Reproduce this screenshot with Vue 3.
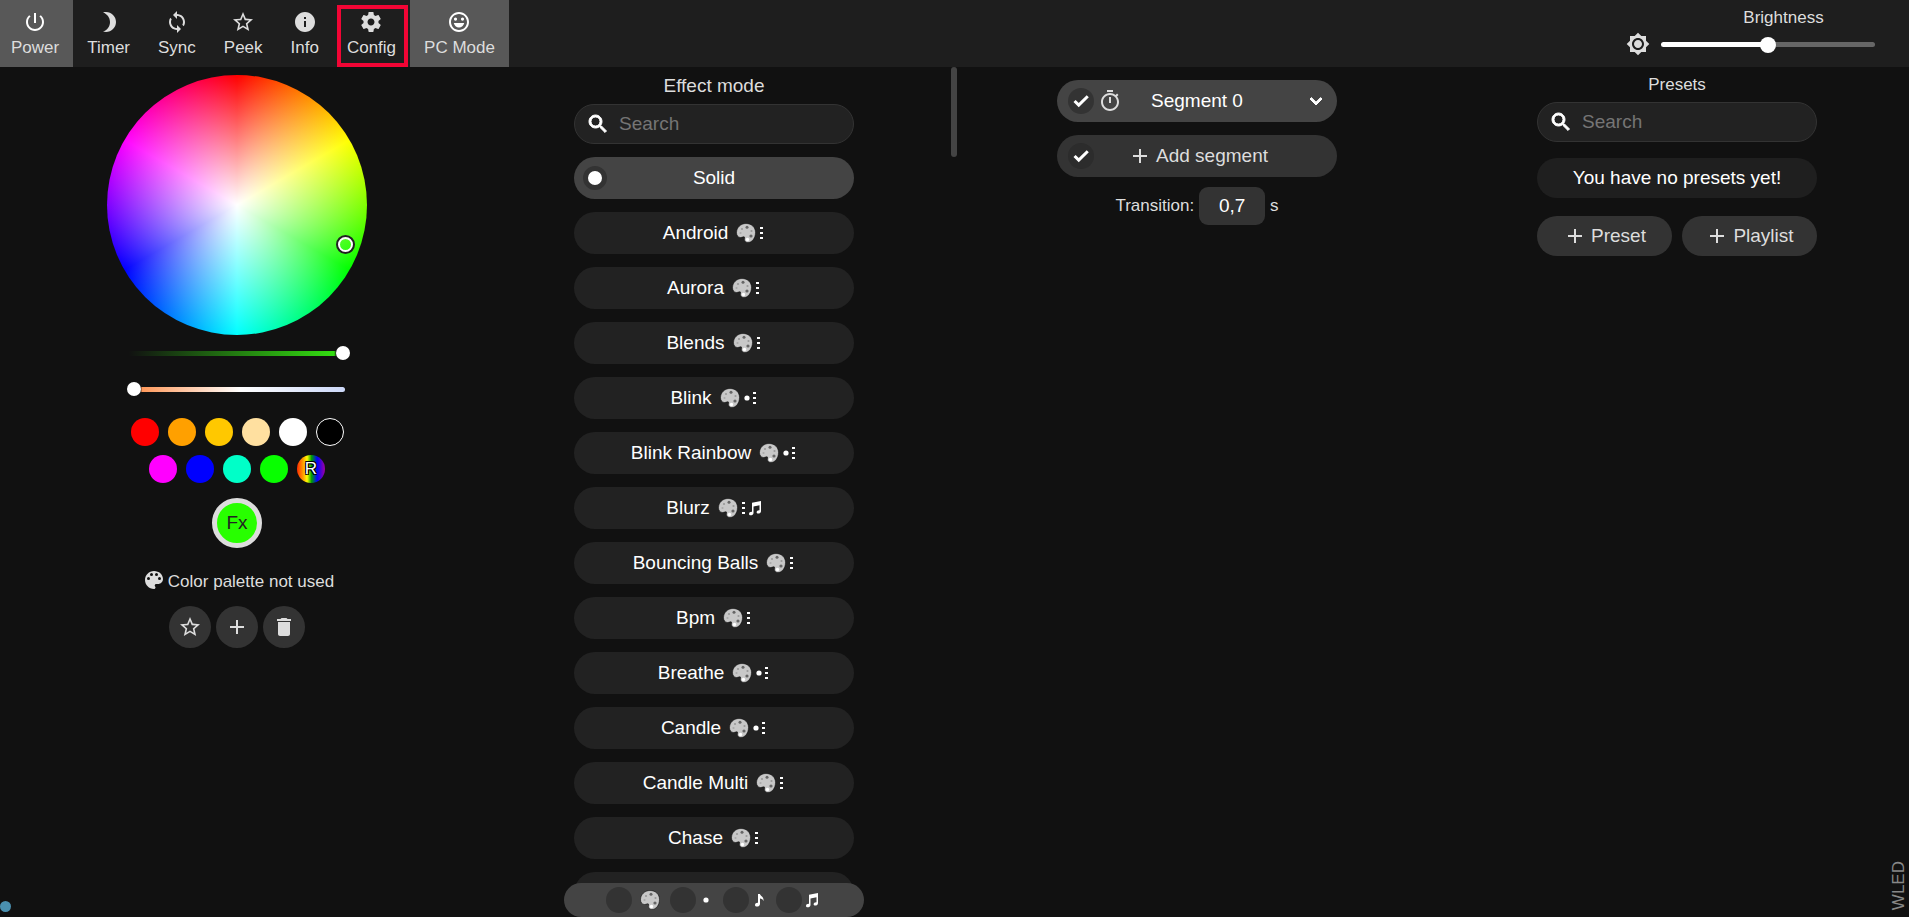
<script setup>
import { ref, computed } from 'vue'

const icons = {
    power: 'M13 3h-2v10h2V3zm4.83 2.17l-1.42 1.42C17.99 7.86 19 9.81 19 12c0 3.87-3.13 7-7 7s-7-3.13-7-7c0-2.19 1.01-4.14 2.58-5.42L6.17 5.17C4.23 6.82 3 9.26 3 12c0 4.97 4.03 9 9 9s9-4.03 9-9c0-2.74-1.23-5.18-3.17-6.83z',
    moon: 'M9 2c-1.05 0-2.05.16-3 .46 4.06 1.27 7 5.06 7 9.54 0 4.48-2.94 8.27-7 9.54.95.3 1.95.46 3 .46 5.52 0 10-4.48 10-10S14.52 2 9 2z',
    sync: 'M12 4V1L8 5l4 4V6c3.31 0 6 2.69 6 6 0 1.01-.25 1.97-.7 2.8l1.46 1.46C19.54 15.03 20 13.57 20 12c0-4.42-3.58-8-8-8zm0 14c-3.31 0-6-2.69-6-6 0-1.01.25-1.97.7-2.8L5.24 7.74C4.46 8.97 4 10.43 4 12c0 4.42 3.58 8 8 8v3l4-4-4-4v3z',
    star: 'M22 9.24l-7.19-.62L12 2 9.19 8.63 2 9.24l5.46 4.73L5.82 21 12 17.27 18.18 21l-1.63-7.03L22 9.24zM12 15.4l-3.76 2.27 1-4.28-3.32-2.88 4.38-.38L12 6.1l1.71 4.04 4.38.38-3.32 2.88 1 4.28L12 15.4z',
    info: 'M12 2C6.48 2 2 6.48 2 12s4.48 10 10 10 10-4.48 10-10S17.52 2 12 2zm1 15h-2v-6h2v6zm0-8h-2V7h2v2z',
    cog: 'M19.43 12.98c.04-.32.07-.64.07-.98s-.03-.66-.07-.98l2.11-1.65c.19-.15.24-.42.12-.64l-2-3.46c-.12-.22-.39-.3-.61-.22l-2.49 1c-.52-.4-1.08-.73-1.69-.98l-.38-2.65C14.46 2.18 14.25 2 14 2h-4c-.25 0-.46.18-.49.42l-.38 2.65c-.61.25-1.17.59-1.69.98l-2.49-1c-.23-.09-.49 0-.61.22l-2 3.46c-.13.22-.07.49.12.64l2.11 1.65c-.04.32-.07.65-.07.98s.03.66.07.98l-2.11 1.65c-.19.15-.24.42-.12.64l2 3.46c.12.22.39.3.61.22l2.49-1c.52.4 1.08.73 1.69.98l.38 2.65c.03.24.24.42.49.42h4c.25 0 .46-.18.49-.42l.38-2.65c.61-.25 1.17-.59 1.69-.98l2.49 1c.23.09.49 0 .61-.22l2-3.46c.12-.22.07-.49-.12-.64l-2.11-1.65zM12 15.5c-1.93 0-3.5-1.57-3.5-3.5s1.57-3.5 3.5-3.5 3.5 1.57 3.5 3.5-1.57 3.5-3.5 3.5z',
    smile: 'M12 2C6.48 2 2 6.48 2 12s4.48 10 10 10 10-4.48 10-10S17.52 2 12 2zm0 18c-4.42 0-8-3.58-8-8s3.58-8 8-8 8 3.58 8 8-3.58 8-8 8zM8.5 7.5a1.6 1.6 0 1 0 0 3.2 1.6 1.6 0 0 0 0-3.2zm7 0a1.6 1.6 0 1 0 0 3.2 1.6 1.6 0 0 0 0-3.2zM6.8 13c.5 2.6 2.6 4.5 5.2 4.5s4.7-1.9 5.2-4.5z',
    sun: 'M20 8.69V4h-4.69L12 .69 8.69 4H4v4.69L.69 12 4 15.31V20h4.69L12 23.31 15.31 20H20v-4.69L23.31 12 20 8.69zM12 18c-3.31 0-6-2.69-6-6s2.69-6 6-6 6 2.69 6 6-2.69 6-6 6zm0-10c-2.21 0-4 1.79-4 4s1.79 4 4 4 4-1.79 4-4-1.79-4-4-4z',
    search: 'M15.5 14h-.79l-.28-.27C15.41 12.59 16 11.11 16 9.5 16 5.91 13.09 3 9.5 3S3 5.91 3 9.5 5.91 16 9.5 16c1.61 0 3.09-.59 4.23-1.57l.27.28v.79l5 4.99L20.49 19l-4.99-5zm-6 0C7.01 14 5 11.99 5 9.5S7.01 5 9.5 5 14 7.01 14 9.5 11.99 14 9.5 14z',
    palette: 'M12 3c-4.97 0-9 4.03-9 9s4.03 9 9 9c.83 0 1.5-.67 1.5-1.5 0-.39-.15-.74-.39-1.01-.23-.26-.38-.61-.38-.99 0-.83.67-1.5 1.5-1.5H16c2.76 0 5-2.24 5-5 0-4.42-4.03-8-9-8zm-5.5 9a1.5 1.5 0 1 1 0-3 1.5 1.5 0 0 1 0 3zm3-4a1.5 1.5 0 1 1 0-3 1.5 1.5 0 0 1 0 3zm5 0a1.5 1.5 0 1 1 0-3 1.5 1.5 0 0 1 0 3zm3 4a1.5 1.5 0 1 1 0-3 1.5 1.5 0 0 1 0 3z',
    plus: 'M19 13h-6v6h-2v-6H5v-2h6V5h2v6h6v2z',
    trash: 'M6 19c0 1.1.9 2 2 2h8c1.1 0 2-.9 2-2V7H6v12zM19 4h-3.5l-1-1h-5l-1 1H5v2h14V4z',
    timer: 'M15 1H9v2h6V1zm-4 13h2V8h-2v6zm8.03-6.61l1.42-1.42c-.43-.51-.9-.99-1.41-1.41l-1.42 1.42C16.07 4.74 14.12 4 12 4c-4.97 0-9 4.03-9 9s4.02 9 9 9 9-4.03 9-9c0-2.12-.74-4.07-1.97-5.61zM12 20c-3.87 0-7-3.13-7-7s3.13-7 7-7 7 3.13 7 7-3.13 7-7 7z',
    check: 'M9 16.17L4.83 12l-1.42 1.41L9 19 21 7l-1.41-1.41z',
    down: 'M7.41 8.59L12 13.17l4.59-4.58L18 10l-6 6-6-6z'
}

const navItems = [
    { name: 'Power', icon: 'power', active: true },
    { name: 'Timer', icon: 'moon' },
    { name: 'Sync', icon: 'sync' },
    { name: 'Peek', icon: 'star' },
    { name: 'Info', icon: 'info' },
    { name: 'Config', icon: 'cog', marked: true },
    { name: 'PC Mode', icon: 'smile', active: true }
]

const quickColors = [
    ['#ff0000', '#ffa000', '#ffc800', '#ffe0a0', '#ffffff', '#000000'],
    ['#ff00ff', '#0000ff', '#00ffc8', '#08ff00', 'random']
]

// flags: p = palette, 0 = single pixel, 1 = strip, f = frequency
const effects = [
    { name: 'Solid', flags: '' },
    { name: 'Android', flags: 'p1' },
    { name: 'Aurora', flags: 'p1' },
    { name: 'Blends', flags: 'p1' },
    { name: 'Blink', flags: 'p01' },
    { name: 'Blink Rainbow', flags: 'p01' },
    { name: 'Blurz', flags: 'p1f' },
    { name: 'Bouncing Balls', flags: 'p1' },
    { name: 'Bpm', flags: 'p1' },
    { name: 'Breathe', flags: 'p01' },
    { name: 'Candle', flags: 'p01' },
    { name: 'Candle Multi', flags: 'p1' },
    { name: 'Chase', flags: 'p1' },
    { name: 'Chase 2', flags: 'p1' }
]

const filters = [
    { flag: 'p', label: 'Palette' },
    { flag: '0', label: 'Single pixel' },
    { flag: 'v', label: 'Volume' },
    { flag: 'f', label: 'Frequency' }
]

const selected = ref('Solid')
const effectQuery = ref('')
const presetQuery = ref('')
const transition = ref('0,7')
const brightness = ref(128)

const shownEffects = computed(() =>
    effects.filter(e => e.name.toLowerCase().includes(effectQuery.value.toLowerCase()))
)
const brightnessPercent = computed(() => brightness.value / 255 * 100 + '%')
</script>

<template>
    <div class="app">
        <svg class="defs" aria-hidden="true">
            <symbol id="flag-p" viewBox="0 0 20 20">
                <path fill="#c8c8c8" stroke="#111" stroke-width=".6" d="M10 .5C15.5.5 19.5 4.3 19.5 9.5c0 5.6-3.5 10-7.5 10-2.5 0-3.6-1.6-3.6-3.2 0-.9.4-1.7.1-2.2-.6-.9-2 .4-4 .4C2 14.5.5 12.3.5 9.7.5 4.5 4.8.5 10 .5z" />
                <g fill="#666">
                    <circle cx="11" cy="4.2" r="1.5" />
                    <circle cx="15" cy="13" r="1.6" />
                    <circle cx="15.5" cy="8" r="1.1" fill="#999" />
                    <circle cx="6" cy="6" r="1.1" fill="#999" />
                    <circle cx="4.5" cy="10" r="1.1" fill="#aaa" />
                </g>
                <circle cx="11.5" cy="16.5" r="1.7" fill="#fff" />
            </symbol>
            <symbol id="flag-0" viewBox="0 0 8 20"><circle cx="4" cy="10" r="2.6" fill="#fff" /></symbol>
            <symbol id="flag-1" viewBox="0 0 6 20">
                <path fill="#fff" d="M1 4h3v2H1zM1 9h3v2H1zM1 14h3v2H1z" />
            </symbol>
            <symbol id="flag-v" viewBox="0 0 14 20">
                <path fill="#fff" d="M6 4h2c.2 2 4 2.5 3.5 7-.7-1.7-2-2.2-3.5-2.4V14c0 3-5 3.500-5 1 0-1.7 1.6-2.4 3-2.2z" />
            </symbol>
            <symbol id="flag-f" viewBox="0 0 14 20">
                <path fill="#fff" d="M4 4.800L13 3v10.200c0 2.600-4.400 3.300-4.400 1 0-1.500 1.500-2.200 2.900-2V7.200l-6 1.200v6.500c0 2.600-4.500 3.300-4.500 1 0-1.500 1.500-2.200 3-2z" />
            </symbol>
        </svg>

        <header class="top">
            <nav class="nav">
                <button v-for="item in navItems" :key="item.name" class="nav-btn" :class="{ active: item.active, marked: item.marked }">
                    <svg class="icon" viewBox="0 0 24 24"><path :d="icons[item.icon]" /></svg>
                    <span>{{ item.name }}</span>
                </button>
            </nav>
            <div class="brightness">
                <label for="bri">Brightness</label>
                <div class="bri-row">
                    <svg class="icon" viewBox="0 0 24 24"><path :d="icons.sun" /></svg>
                    <input id="bri" v-model="brightness" class="range bri" type="range" min="0" max="255" :style="{ '--fill': brightnessPercent }">
                </div>
            </div>
        </header>

        <main class="columns">
            <section class="col colors">
                <div class="wheel"><span class="handle"></span></div>
                <input class="range value" type="range" min="0" max="100" value="100" aria-label="Value">
                <input class="range kelvin" type="range" min="0" max="100" value="0" aria-label="Temperature">
                <div class="swatches">
                    <div v-for="(row, i) in quickColors" :key="i" class="swatch-row">
                        <template v-for="c in row" :key="c">
                            <button v-if="c === 'random'" class="swatch random">R</button>
                            <button v-else class="swatch" :class="{ outlined: c === '#000000' }" :style="{ backgroundColor: c }" :aria-label="c"></button>
                        </template>
                    </div>
                </div>
                <button class="slot">Fx</button>
                <p class="palette-note">
                    <svg viewBox="2 2 20 20"><path :d="icons.palette" /></svg>
                    Color palette not used
                </p>
                <div class="round-row">
                    <button v-for="name in ['star', 'plus', 'trash']" :key="name" class="round" :aria-label="name">
                        <svg class="icon" viewBox="0 0 24 24"><path :d="icons[name]" /></svg>
                    </button>
                </div>
            </section>

            <section class="col effects">
                <h2>Effect mode</h2>
                <div class="search">
                    <svg class="icon" viewBox="0 0 24 24"><path :d="icons.search" /></svg>
                    <input v-model="effectQuery" type="text" placeholder="Search" aria-label="Search effects">
                </div>
                <div class="list">
                    <label v-for="e in shownEffects" :key="e.name" class="effect" :class="{ selected: selected === e.name }">
                        <input v-model="selected" type="radio" name="fx" :value="e.name">
                        <span>{{ e.name }}</span>
                        <span v-if="e.flags" class="flags">
                            <svg v-for="f in e.flags" :key="f" :class="'flag-' + f"><use :href="'#flag-' + f" /></svg>
                        </span>
                    </label>
                </div>
                <div class="filters">
                    <label v-for="f in filters" :key="f.flag" class="filter">
                        <input type="checkbox" :aria-label="f.label">
                        <svg :class="'flag-' + f.flag"><use :href="'#flag-' + f.flag" /></svg>
                    </label>
                </div>
                <span class="scroll-thumb"></span>
            </section>

            <section class="col segments">
                <div class="segment">
                    <label class="tick">
                        <input type="checkbox" checked aria-label="Select segment">
                        <svg viewBox="0 0 24 24"><path :d="icons.check" /></svg>
                    </label>
                    <svg class="icon" viewBox="0 0 24 24"><path :d="icons.timer" /></svg>
                    <span class="segment-name">Segment 0</span>
                    <button class="expand" aria-label="Expand">
                        <svg viewBox="0 0 24 24"><path :d="icons.down" /></svg>
                    </button>
                </div>
                <div class="segment add">
                    <label class="tick">
                        <input type="checkbox" checked aria-label="Select all segments">
                        <svg viewBox="0 0 24 24"><path :d="icons.check" /></svg>
                    </label>
                    <button class="add-btn">
                        <svg class="icon" viewBox="0 0 24 24"><path :d="icons.plus" /></svg>
                        Add segment
                    </button>
                </div>
                <div class="transition">
                    <label for="tt">Transition:</label>
                    <input id="tt" v-model="transition" type="text">
                    <span>s</span>
                </div>
            </section>

            <section class="col presets">
                <h3>Presets</h3>
                <div class="search">
                    <svg class="icon" viewBox="0 0 24 24"><path :d="icons.search" /></svg>
                    <input v-model="presetQuery" type="text" placeholder="Search" aria-label="Search presets">
                </div>
                <p class="no-presets">You have no presets yet!</p>
                <div class="preset-row">
                    <button v-for="name in ['Preset', 'Playlist']" :key="name" class="preset-btn">
                        <svg class="icon" viewBox="0 0 24 24"><path :d="icons.plus" /></svg>
                        {{ name }}
                    </button>
                </div>
            </section>
        </main>

        <span class="connection"></span>
        <span class="brand">WLED</span>
    </div>
</template>

<style>
body {
    background: #111;
}
</style>

<style scoped>
.app {
    position: relative;
    display: flex;
    flex-direction: column;
    height: 100vh;
    overflow: hidden;
    background: #111;
    color: #ddd;
    font: 17px/20px "Liberation Sans", Arial, sans-serif;
}

.app *, .app *::after {
    box-sizing: border-box;
}

.defs {
    position: absolute;
    width: 0;
    height: 0;
}

button, input {
    margin: 0;
    font: inherit;
    color: inherit;
}

button {
    padding: 0;
    border: none;
    background: none;
    cursor: pointer;
}

h2, h3, p {
    margin: 0;
    font-weight: normal;
}

svg {
    flex: none;
    display: block;
}

.icon {
    width: 24px;
    height: 24px;
    fill: currentColor;
}

/* top bar */
.top {
    display: flex;
    justify-content: space-between;
    flex: none;
    height: 67px;
    background: #1e1e1e;
}

.nav {
    display: flex;
    margin-left: -3px;
}

.nav-btn {
    position: relative;
    display: flex;
    flex-direction: column;
    align-items: center;
    gap: 4px;
    padding: 10px 14px 9px;
}

.nav-btn.active {
    background: #585858;
}

.nav-btn.active .icon {
    fill: #fff;
}

.nav-btn.marked::after {
    content: "";
    position: absolute;
    inset: 5px 2px 0 4px;
    border: 4px solid #f20535;
}

.brightness {
    display: flex;
    flex-direction: column;
    gap: 4px;
    padding: 8px 34px 0 0;
}

.brightness label {
    padding-left: 66px;
    text-align: center;
}

.bri-row {
    display: flex;
    align-items: center;
    gap: 11px;
}

/* sliders */
.range {
    appearance: none;
    height: 24px;
    background: transparent;
}

.range::-webkit-slider-runnable-track {
    height: 5px;
    border-radius: 3px;
}

.range::-webkit-slider-thumb {
    appearance: none;
    width: 14px;
    height: 14px;
    margin-top: -5px;
    border-radius: 50%;
    background: #fff;
}

.bri {
    width: 214px;
}

.bri::-webkit-slider-runnable-track {
    background: linear-gradient(to right, #fff var(--fill), #666 var(--fill));
}

.bri::-webkit-slider-thumb {
    width: 16px;
    height: 16px;
}

.value::-webkit-slider-runnable-track {
    background: linear-gradient(to right, #111 2%, #33dd11 93%, #111 94%);
}

.kelvin::-webkit-slider-runnable-track {
    background: linear-gradient(to right, #111 6%, #ff9a5c 7%, #fff 52%, #ccd8f8);
}

/* columns */
.columns {
    flex: 1;
    min-height: 0;
    display: grid;
    grid-template-columns: repeat(4, 1fr);
    margin: 0 -8px 0 -3px;
}

.col {
    position: relative;
    display: flex;
    flex-direction: column;
    align-items: center;
    min-width: 0;
    min-height: 0;
}

.colors {
    padding-top: 8px;
}

.wheel {
    position: relative;
    width: 260px;
    height: 260px;
    border-radius: 50%;
    background:
        radial-gradient(circle closest-side, #fff, transparent),
        conic-gradient(#f00, #ff0, #0f0, #0ff, #00f, #f0f, #f00);
}

.handle {
    position: absolute;
    left: 230px;
    top: 161px;
    width: 17px;
    height: 17px;
    border: 3px solid #fff;
    border-radius: 50%;
    outline: 2px solid #222;
    outline-offset: -1px;
}

.value {
    width: 226px;
    margin-top: 6px;
}

.kelvin {
    width: 218px;
    margin: 12px 2px 0 0;
}

.swatches {
    display: flex;
    flex-direction: column;
    gap: 9px;
    margin-top: 17px;
}

.swatch-row {
    display: flex;
    justify-content: center;
    gap: 9px;
}

.swatch {
    width: 28px;
    height: 28px;
    border-radius: 50%;
}

.swatch.outlined {
    border: 1px solid #fff;
}

.swatch.random {
    background: linear-gradient(to right, #ff2a00, #ffa000 22%, #ffff00 36%, #00a000 52%, #0000ff 72%, #a000a0);
    color: #fff;
    text-shadow: -1px -1px 0 #000, 1px -1px 0 #000, -1px 1px 0 #000, 1px 1px 0 #000;
}

.slot {
    width: 50px;
    height: 50px;
    margin-top: 15px;
    border: 5px solid #ddd;
    border-radius: 50%;
    background: #28ff00;
    color: #222;
    font-size: 19px;
}

.palette-note {
    display: flex;
    align-items: center;
    gap: 4px;
    margin-top: 22px;
    padding-left: 4px;
}

.palette-note svg {
    width: 20px;
    height: 20px;
    margin-bottom: 4px;
    fill: #ddd;
}

.round-row {
    display: flex;
    gap: 5px;
    margin-top: 12px;
}

.round {
    display: flex;
    align-items: center;
    justify-content: center;
    width: 42px;
    height: 42px;
    border-radius: 50%;
    background: #333;
}

.search {
    display: flex;
    align-items: center;
    flex: none;
    gap: 9px;
    width: 280px;
    height: 40px;
    padding: 0 12px 0 11px;
    border: 1px solid #333;
    border-radius: 20px;
    background: #222;
}

.search .icon {
    fill: #fff;
    stroke: #fff;
}

.search input {
    flex: 1;
    min-width: 0;
    padding: 0;
    border: none;
    outline: none;
    background: transparent;
    font-size: 19px;
}

.search input::placeholder {
    color: #757575;
}

/* effects */
.effects {
    padding: 9px 6px 0 0;
    overflow: hidden;
}

.effects h2 {
    margin-bottom: 8px;
    font-size: 19px;
}

.list {
    display: flex;
    flex-direction: column;
    gap: 13px;
    min-height: 0;
    margin-top: 13px;
    overflow-y: auto;
    scrollbar-width: none;
}

.effect {
    position: relative;
    display: flex;
    align-items: center;
    justify-content: center;
    flex: none;
    gap: 8px;
    width: 280px;
    height: 42px;
    border-radius: 21px;
    background: #222;
    color: #fff;
    font-size: 19px;
    cursor: pointer;
}

.effect.selected {
    background: #444;
}

.effect input {
    position: absolute;
    left: 9px;
    appearance: none;
    width: 24px;
    height: 24px;
    border-radius: 50%;
}

.effect input:checked {
    border: 5px solid #333;
    background: #fff;
}

.flags {
    display: flex;
    align-items: center;
    gap: 1px;
}

.flag-p {
    width: 20px;
    height: 20px;
}

.effect .flag-p {
    margin-right: 2px;
}

.flag-0 {
    width: 8px;
    height: 20px;
}

.flag-1 {
    width: 6px;
    height: 20px;
}

.flag-v, .flag-f {
    width: 14px;
    height: 20px;
}

.filters {
    position: absolute;
    bottom: 0;
    display: flex;
    align-items: center;
    justify-content: center;
    gap: 10px;
    width: 300px;
    height: 34px;
    padding-right: 4px;
    border-radius: 17px;
    background: #444;
}

.filter {
    display: flex;
    align-items: center;
    gap: 3px;
}

.filter:first-child {
    gap: 8px;
}

.filter .flag-0 {
    width: 14px;
}

.filter input {
    appearance: none;
    width: 26px;
    height: 26px;
    border-radius: 50%;
    background: #333;
}

.scroll-thumb {
    position: absolute;
    top: 0;
    right: 0;
    width: 6px;
    height: 90px;
    border-radius: 3px;
    background: #444;
}

/* segments */
.segments {
    gap: 13px;
    padding-top: 13px;
}

.segment {
    display: flex;
    align-items: center;
    gap: 4px;
    width: 280px;
    height: 42px;
    padding: 0 9px 0 11px;
    border-radius: 21px;
    background: #444;
    color: #fff;
    font-size: 19px;
}

.segment > .icon {
    fill: #ddd;
}

.segment.add {
    background: #333;
    color: #ddd;
}

.tick {
    display: grid;
    place-items: center;
}

.tick input, .tick svg {
    grid-area: 1 / 1;
}

.tick input {
    appearance: none;
    width: 26px;
    height: 26px;
    border-radius: 50%;
    background: #333;
}

.add .tick input {
    background: #2c2c2c;
}

.tick svg {
    width: 18px;
    height: 18px;
    fill: #fff;
    stroke: #fff;
    stroke-width: 2;
    pointer-events: none;
}

.segment-name {
    flex: 1;
    padding-right: 32px;
    text-align: center;
}

.expand svg {
    width: 24px;
    height: 24px;
    fill: #fff;
    stroke: #fff;
}

.add-btn {
    display: flex;
    align-items: center;
    justify-content: center;
    flex: 1;
    gap: 4px;
    padding-right: 30px;
}

.transition {
    display: flex;
    align-items: center;
    gap: 5px;
    margin-top: -3px;
}

.transition input {
    width: 66px;
    height: 38px;
    padding: 0;
    border: none;
    border-radius: 9px;
    background: #333;
    color: #fff;
    font-size: 19px;
    text-align: center;
}

/* presets */
.presets {
    padding-top: 8px;
}

.presets h3 {
    margin-bottom: 7px;
    font-size: 17px;
}

.no-presets {
    width: 280px;
    margin: 16px 0 18px;
    padding: 10px 0;
    border-radius: 20px;
    background: #1f1f1f;
    color: #fff;
    font-size: 19px;
    text-align: center;
}

.preset-row {
    display: flex;
    gap: 10px;
}

.preset-btn {
    display: flex;
    align-items: center;
    justify-content: center;
    gap: 4px;
    width: 135px;
    height: 40px;
    border-radius: 20px;
    background: #333;
    font-size: 19px;
}

.connection {
    position: absolute;
    left: 0;
    bottom: 5px;
    width: 11px;
    height: 11px;
    border-radius: 50%;
    background: #4a90b0;
}

.brand {
    position: absolute;
    right: 0;
    bottom: 7px;
    color: #888;
    writing-mode: vertical-rl;
    transform: rotate(180deg);
}
</style>
